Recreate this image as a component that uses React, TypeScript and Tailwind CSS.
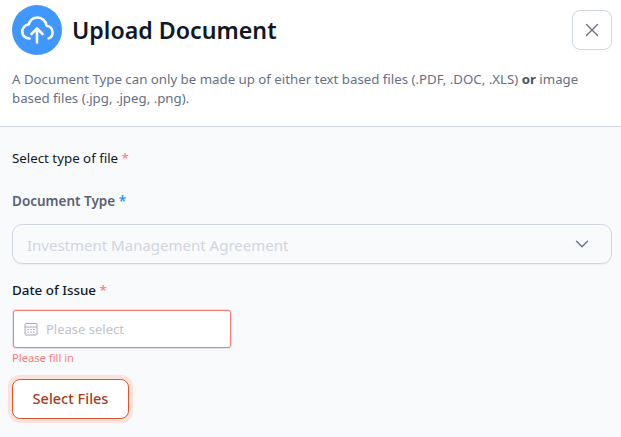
import { X, ChevronDown } from "lucide-react";

export default function App() {
  return (
    <div className="h-[437px] w-[621px] overflow-hidden bg-[#f9fafc] font-['Noto_Sans',sans-serif]">
      <header className="h-[127px] border-b border-[#d0d5e2] bg-white pt-[5px] pr-[9px] pl-3">
        <div className="flex items-start justify-between">
          <div className="flex items-center gap-2.5">
            <div className="flex h-[50px] w-[50px] items-center justify-center rounded-full bg-[#3f97ff]">
              <svg width="34" height="34" viewBox="0 0 34 34" fill="none" stroke="white" strokeWidth="2.6" strokeLinecap="round" strokeLinejoin="round">
                <path d="M9.5 25.5C5.2 25.5 2.2 22.4 2.2 18.6C2.2 14.9 5 11.9 8.6 11.5C10 7.3 13.4 4.5 17.4 4.5C22 4.5 25.8 7.9 26.5 12.6C30 13.1 32.6 16 32.6 19.4C32.6 22.1 31 24.5 28.6 25.4" />
                <path d="M17 29.5V15.5M11.5 21L17 15.5L22.5 21" />
              </svg>
            </div>
            <h1 className="text-[23.2px] leading-8 font-semibold text-[#101828]">Upload Document</h1>
          </div>
          <button className="mt-[5px] flex h-10 w-10 items-center justify-center rounded-lg border border-[#d0d5e2] bg-white text-[#667085]">
            <X size={22} strokeWidth={1.5} />
          </button>
        </div>
        <p className="mt-[15px] w-[580px] text-[13.25px] leading-[19px] text-[#667085]">
          A Document Type can only be made up of either text based files (.PDF, .DOC, .XLS) <b className="font-bold text-[#475467]">or</b> image based files (.jpg, .jpeg, .png).
        </p>
      </header>
      <main className="pr-[9px] pl-3">
        <div className="mt-[21px] text-[13.3px] leading-5 text-[#101828]">
          Select type of file <span className="text-[#fb7c7c]">*</span>
        </div>
        <div className="mt-[23px] text-[13.5px] leading-5 font-semibold text-[#596173]">
          Document Type <span className="text-[#2e90fa]">*</span>
        </div>
        <div className="mt-[13px] flex h-10 items-center justify-between rounded-[10px] border border-[#d0d5e2] pr-[18px] pl-[14px] text-[15px] text-[#d0d5dd] shadow-[0_1px_2px_rgba(16,24,40,0.05)]">
          <span className="translate-y-[1px]">Investment Management Agreement</span>
          <ChevronDown size={22} strokeWidth={1.5} className="text-[#667085]" />
        </div>
        <div className="mt-4 text-[13.4px] leading-5 font-medium text-[#101828]">
          Date of Issue <span className="text-[#fb7c7c]">*</span>
        </div>
        <div className="mt-[10px] ml-[1px] flex h-[38px] w-[218px] items-center gap-2 rounded-[3px] border border-[#f97c7c] bg-white pl-[10px] text-[13px] text-[#c0c4cc] shadow-[0_0_0_1px_#dfe2ea]">
          <svg width="14" height="14" viewBox="0 0 14 14" fill="none" stroke="#a3a9b5" strokeWidth="1">
            <rect x="1" y="1.5" width="12" height="11.5" rx="1" />
            <path d="M1 5H13" />
            <path d="M3.5 7.5H5M6.3 7.5H7.8M9 7.5H10.5M3.5 10H5M6.3 10H7.8M9 10H10.5" />
          </svg>
          <span className="translate-y-[1px]">Please select</span>
        </div>
        <div className="mt-[2px] text-[11.2px] leading-4 text-[#fb7c7c]">Please fill in</div>
        <button className="mt-[13px] flex h-10 w-[117px] items-center justify-center rounded-lg border border-[#e0562a] bg-white text-[14.5px] font-medium text-[#a83b1c] shadow-[0_0_0_4px_#fbe3dc]">
          Select Files
        </button>
      </main>
    </div>
  );
}
